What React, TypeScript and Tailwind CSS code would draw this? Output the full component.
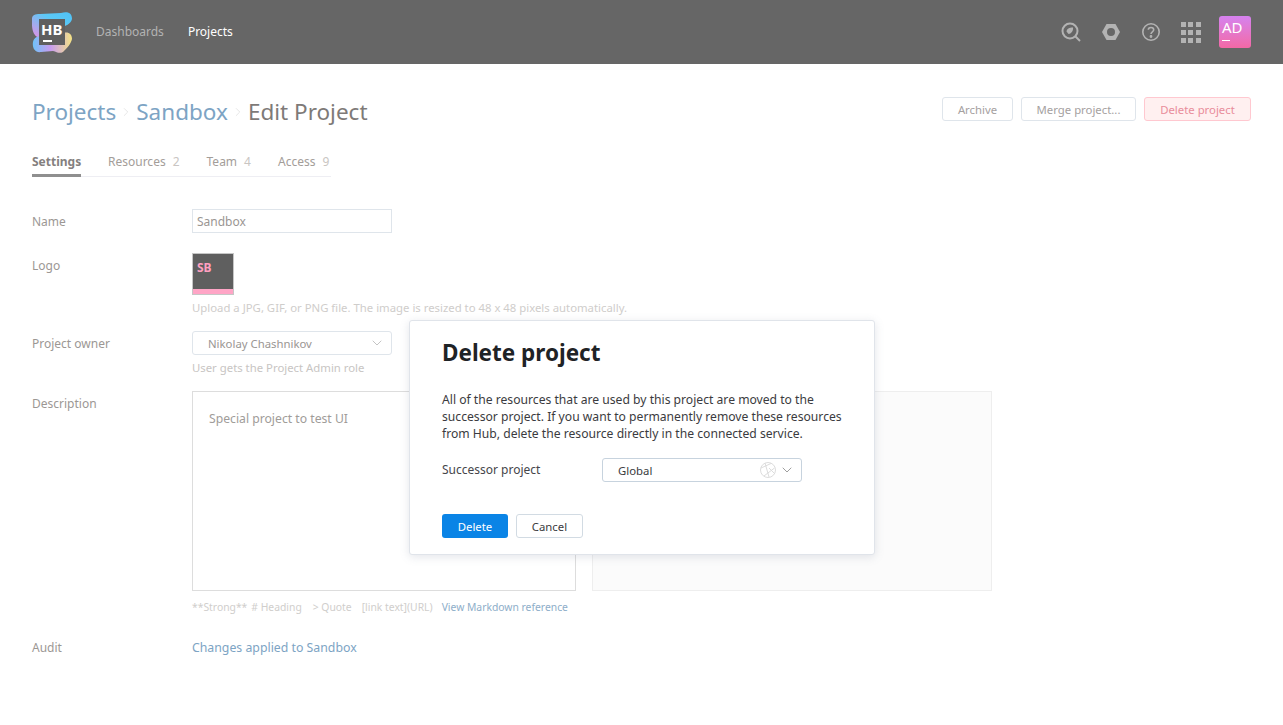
import { ChevronDown, ChevronRight } from "lucide-react";

const font = { fontFamily: '"Noto Sans", "Open Sans", sans-serif' };

const Logo = () => (
  <svg width="42" height="42" viewBox="0 0 42 42" className="shrink-0">
    <defs>
      <linearGradient id="top" x1="0" y1="1" x2="1" y2="0">
        <stop offset="0" stopColor="#e58fe6" />
        <stop offset="0.6" stopColor="#5cc8f5" />
        <stop offset="1" stopColor="#4fc3f7" />
      </linearGradient>
      <linearGradient id="bottom" x1="0" y1="0" x2="1" y2="0">
        <stop offset="0" stopColor="#6fc2f8" />
        <stop offset="0.45" stopColor="#c79cf0" />
        <stop offset="1" stopColor="#f5e384" />
      </linearGradient>
    </defs>
    <path d="M1 8 C1 4 4 3 9 3 L30 2 C38 0 41 3 41 8 C40 13 34 15 30 17 L10 26 C4 28 1 20 1 14 Z" fill="url(#top)" />
    <path d="M2 31 C3 26 8 24 14 25 L30 23 C36 20 41 22 41 28 C40 33 36 37 32 41 C28 43 26 41 22 40 L10 41 C4 42 1 37 2 31 Z" fill="url(#bottom)" />
    <rect x="8" y="8" width="26" height="26" fill="#5f5f5f" />
  </svg>
);

const Tab = ({ label, count }: { label: string; count: string }) => (
  <div className="flex items-start gap-[7px] text-[#a39d99]">
    <span>{label}</span>
    <span className="text-[#c9c5c2]">{count}</span>
  </div>
);

const Row = ({ label, children, className }: { label: string; children: React.ReactNode; className?: string }) => (
  <div className={"flex " + (className ?? "")}>
    <div className="w-40 shrink-0 pt-[5px] text-[#9c9794]">{label}</div>
    <div className="min-w-0 flex-1">{children}</div>
  </div>
);

export default function App() {
  return (
    <div style={font} className="relative h-[725px] w-[1283px] overflow-hidden bg-white text-xs leading-4">
      <header className="flex h-16 items-center bg-[#666666] pl-[31px] pr-8">
        <div className="relative h-[42px] w-[42px]">
          <Logo />
          <span className="absolute left-[10px] top-[8px] text-[15px] font-bold leading-5 text-white">HB</span>
          <span className="absolute left-[12px] top-[29px] h-[2px] w-[9px] bg-white" />
        </div>
        <nav className="ml-[23px] flex gap-6">
          <span className="text-[#b3b3b3]">Dashboards</span>
          <span className="text-white">Projects</span>
        </nav>
        <div className="ml-auto flex items-center">
          <svg width="20" height="20" viewBox="0 0 20 20" fill="none" stroke="#b3b3b3" strokeWidth="2">
            <circle cx="9" cy="9" r="7.5" />
            <path d="M14.5 14.5 L19 19" />
            <path d="M5.5 9.5 C6 6.5 8 5.5 12 5.5 C12.5 9 10 12 7.5 12 Z" fill="#b3b3b3" stroke="none" />
          </svg>
          <svg className="ml-[20px]" width="20" height="20" viewBox="0 0 20 20">
            <path d="M5.5 2 H14.5 L19 10 L14.5 18 H5.5 L1 10 Z" fill="#b3b3b3" />
            <circle cx="10" cy="10" r="4" fill="#666666" />
          </svg>
          <svg className="ml-[20px]" width="20" height="20" viewBox="0 0 20 20" fill="none" stroke="#b3b3b3" strokeWidth="1.6">
            <circle cx="10" cy="10" r="8.2" />
            <path d="M7.3 7.8 C7.3 4.7 12.7 4.7 12.7 7.8 C12.7 9.8 10 9.8 10 12" />
            <circle cx="10" cy="14.5" r="0.6" fill="#b3b3b3" />
          </svg>
          <div className="ml-[20px] grid w-[19px] grid-cols-3 gap-[3px]">
            {[0, 1, 2, 3, 4, 5, 6, 7, 8].map((i) => (
              <span key={i} className="h-[5px] w-[5px] bg-[#b3b3b3]" />
            ))}
          </div>
          <div className="relative ml-[19px] h-8 w-8 rounded-[3px] bg-gradient-to-b from-[#d582ef] to-[#f368a5] text-[15px] leading-5 text-white">
            <span className="absolute left-[3px] top-[1px]">AD</span>
            <span className="absolute left-[3px] top-[24px] h-px w-2 bg-white" />
          </div>
        </div>
      </header>

      <main className="px-8">
        <div className="flex items-start justify-between pt-8">
          <div className="flex items-center text-[22.5px] leading-8">
            <span className="text-[#7da4c4]">Projects</span>
            <ChevronRight size={14} strokeWidth={1} className="mx-[3px] text-[#d5d5d5]" />
            <span className="text-[#7da4c4]">Sandbox</span>
            <ChevronRight size={14} strokeWidth={1} className="mx-[3px] text-[#d5d5d5]" />
            <span className="text-[#7e7a78]">Edit Project</span>
          </div>
          <div className="mt-px flex gap-2 text-[11.35px]">
            <button className="h-6 w-[71px] rounded-[3px] border border-[#dfe5eb] pt-px text-[#a5a19f]">Archive</button>
            <button className="h-6 w-[115px] rounded-[3px] border border-[#dfe5eb] pt-px text-[#a5a19f]">Merge project...</button>
            <button className="h-6 w-[107px] rounded-[3px] border border-[#ffc8d0] bg-[#fff0f0] pt-px text-[#e98d9b]">Delete project</button>
          </div>
        </div>

        <div className="mt-[26px] flex h-[23px] w-[299px] gap-[27px] border-b border-[#eeeef3]">
          <div className="h-[23px] w-[49px] border-b-[3px] border-[#8f8f8f] font-bold text-[#84807e]">Settings</div>
          <Tab label="Resources" count="2" />
          <Tab label="Team" count="4" />
          <Tab label="Access" count="9" />
        </div>

        <Row label="Name" className="mt-8">
          <div className="h-6 w-[200px] border border-[#dfe5eb] px-1 pt-1 text-[#9a9693]">Sandbox</div>
        </Row>

        <Row label="Logo" className="mt-5">
          <div className="flex h-[42px] w-[42px] flex-col border border-[#c6c6c6] bg-[#5f5f5f]">
            <span className="flex-1 pl-1 pt-[6px] text-xs font-bold leading-4 text-[#ff9fc0]">SB</span>
            <span className="h-[5px] bg-[#ffa5c6]" />
          </div>
          <p className="mt-[5px] text-[11.35px] text-[#cfcdcb]">Upload a JPG, GIF, or PNG file. The image is resized to 48 x 48 pixels automatically.</p>
        </Row>

        <Row label="Project owner" className="mt-[15px]">
          <div className="flex h-6 w-[200px] items-center justify-between rounded-[3px] border border-[#dfe5eb] pl-[15px] pr-[6px] text-[11.35px] text-[#9a9693]">
            <span className="pt-px">Nikolay Chashnikov</span>
            <ChevronDown size={16} strokeWidth={1.25} className="text-[#b8b8b8]" />
          </div>
          <p className="mt-[5px] text-[11.35px] text-[#c8c5c3]">User gets the Project Admin role</p>
        </Row>

        <Row label="Description" className="mt-[15px]">
          <div className="flex gap-4">
            <div className="h-[200px] w-[384px] border border-[#dddddd] px-4 py-[19px] text-[12.2px] text-[#a09c99]">Special project to test UI</div>
            <div className="h-[200px] w-[400px] border border-[#eeeeee] bg-[#fbfbfb]" />
          </div>
          <div className="mt-2 flex text-[10.35px] text-[#d0cecc]">
            <span>**Strong**</span>
            <span className="ml-1"># Heading</span>
            <span className="ml-[11px]">&gt; Quote</span>
            <span className="ml-[10px]">[link text](URL)</span>
            <span className="ml-[9px] text-[#8eaec9]">View Markdown reference</span>
          </div>
        </Row>

        <Row label="Audit" className="mt-5">
          <div className="pt-[5px] text-[12.3px] text-[#7da4c4]">Changes applied to Sandbox</div>
        </Row>
      </main>

      <div className="absolute left-[409px] top-[320px] h-[235px] w-[466px] rounded-[3px] border border-[#e0e4ea] bg-white px-8 pt-4 shadow-[0_2px_10px_rgba(100,110,140,0.18)]">
        <h2 className="text-[22.5px] font-bold leading-8 text-[#1f2326]">Delete project</h2>
        <p className="mt-[22px] w-[408px] text-[12.15px] leading-[17px] text-[#3b3b40]">
          All of the resources that are used by this project are moved to the successor project. If you want to permanently remove these resources from Hub, delete the resource directly in the connected service.
        </p>
        <div className="mt-4 flex items-start">
          <span className="w-40 shrink-0 pt-1 text-[#45454a]">Successor project</span>
          <div className="flex h-6 w-[200px] items-center rounded-[3px] border border-[#c7d3de] pl-[15px] pr-[6px] text-[11.35px] text-[#3b3b40]">
            <span className="pt-px">Global</span>
            <svg className="ml-auto" width="16" height="16" viewBox="0 0 16 16" fill="none" stroke="#dcdcdc" strokeWidth="1">
              <circle cx="8" cy="8" r="7.5" />
              <path d="M1 6 L11 1.5 M5 1 L9 15 M4 14 L14.5 6 M9 6 L14 11" />
            </svg>
            <ChevronDown size={16} strokeWidth={1.25} className="ml-[3px] text-[#8a8a8a]" />
          </div>
        </div>
        <div className="mt-8 flex gap-2 text-[11.35px]">
          <button className="h-6 w-[66px] rounded-[3px] bg-[#0a84e6] pt-px text-white">Delete</button>
          <button className="h-6 w-[67px] rounded-[3px] border border-[#d2dbe3] pt-px text-[#3b3b40]">Cancel</button>
        </div>
      </div>
    </div>
  );
}
